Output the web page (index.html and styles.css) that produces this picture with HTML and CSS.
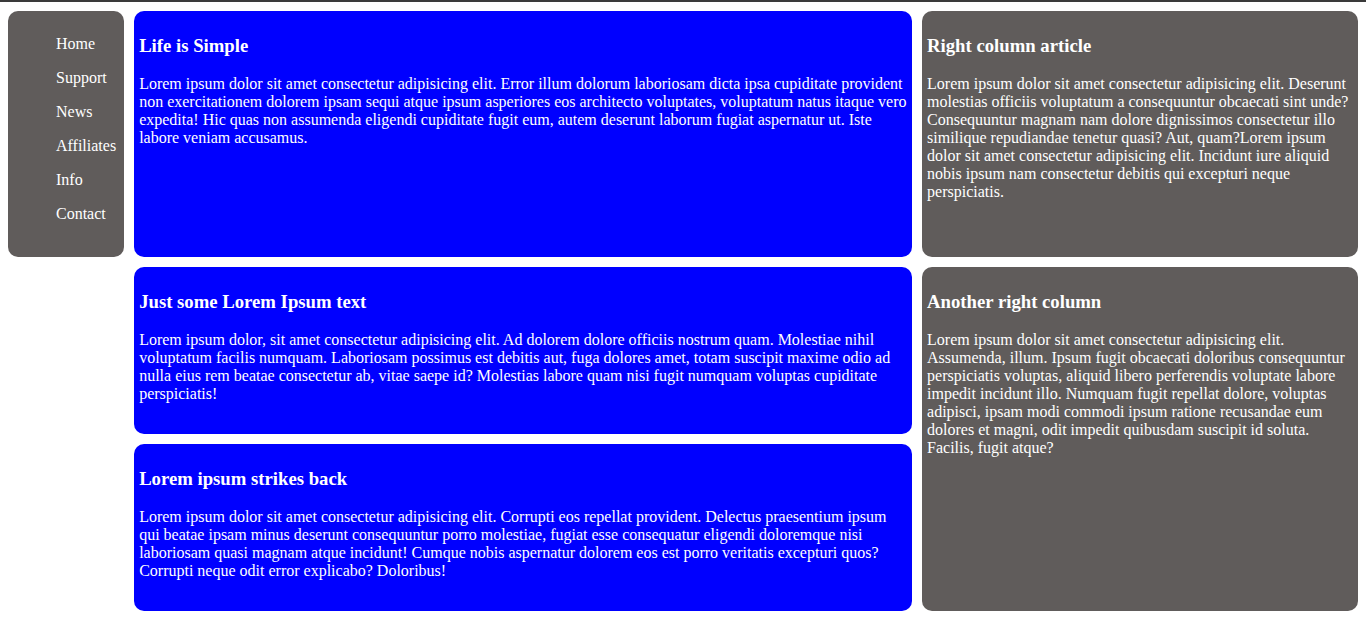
FILE: index.html
```html
<!DOCTYPE html>
<html lang="en">
<head>
<meta charset="utf-8">
<title>Layout</title>
<link rel="stylesheet" href="styles.css">
</head>
<body>
<div class="grid">
  <nav class="nav">
    <ul class="nav-list">
      <li>Home</li>
      <li>Support</li>
      <li>News</li>
      <li>Affiliates</li>
      <li>Info</li>
      <li>Contact</li>
    </ul>
  </nav>
  <section class="card blue r1">
    <h3>Life is Simple</h3>
    <p>Lorem ipsum dolor sit amet consectetur adipisicing elit. Error illum dolorum laboriosam dicta ipsa cupiditate provident non exercitationem dolorem ipsam sequi atque ipsum asperiores eos architecto voluptates, voluptatum natus itaque vero expedita! Hic quas non assumenda eligendi cupiditate fugit eum, autem deserunt laborum fugiat aspernatur ut. Iste labore veniam accusamus.</p>
  </section>
  <section class="card gray r1">
    <h3>Right column article</h3>
    <p>Lorem ipsum dolor sit amet consectetur adipisicing elit. Deserunt molestias officiis voluptatum a consequuntur obcaecati sint unde? Consequuntur magnam nam dolore dignissimos consectetur illo similique repudiandae tenetur quasi? Aut, quam?Lorem ipsum dolor sit amet consectetur adipisicing elit. Incidunt iure aliquid nobis ipsum nam consectetur debitis qui excepturi neque perspiciatis.</p>
  </section>
  <section class="card blue main2">
    <h3>Just some Lorem Ipsum text</h3>
    <p>Lorem ipsum dolor, sit amet consectetur adipisicing elit. Ad dolorem dolore officiis nostrum quam. Molestiae nihil voluptatum facilis numquam. Laboriosam possimus est debitis aut, fuga dolores amet, totam suscipit maxime odio ad nulla eius rem beatae consectetur ab, vitae saepe id? Molestias labore quam nisi fugit numquam voluptas cupiditate perspiciatis!</p>
  </section>
  <section class="card gray side2">
    <h3>Another right column</h3>
    <p>Lorem ipsum dolor sit amet consectetur adipisicing elit. Assumenda, illum. Ipsum fugit obcaecati doloribus consequuntur perspiciatis voluptas, aliquid libero perferendis voluptate labore impedit incidunt illo. Numquam fugit repellat dolore, voluptas adipisci, ipsam modi commodi ipsum ratione recusandae eum dolores et magni, odit impedit quibusdam suscipit id soluta. Facilis, fugit atque?</p>
  </section>
  <section class="card blue main3">
    <h3>Lorem ipsum strikes back</h3>
    <p>Lorem ipsum dolor sit amet consectetur adipisicing elit. Corrupti eos repellat provident. Delectus praesentium ipsum qui beatae ipsam minus deserunt consequuntur porro molestiae, fugiat esse consequatur eligendi doloremque nisi laboriosam quasi magnam atque incidunt! Cumque nobis aspernatur dolorem eos est porro veritatis excepturi quos? Corrupti neque odit error explicabo? Doloribus!</p>
  </section>
</div>
</body>
</html>
```

FILE: styles.css
```css
html {
  border-top: 2px solid #3a3a3a;
}
body {
  margin: 9px 8px 8px;
  font-family: "Liberation Serif", "Times New Roman", serif;
  font-size: 16px;
  color: #fff;
  background: #fff;
}
.grid {
  display: grid;
  grid-template-columns: 116fr 778fr 436fr;
  grid-template-rows: 245.5px 166.5px 166.5px;
  column-gap: 10px;
  row-gap: 10.5px;
}
.nav {
  grid-column: 1;
  grid-row: 1;
  background: #605c5b;
  border-radius: 10px;
}
.nav-list {
  list-style: none;
  margin: 16px 0;
  padding: 0 0 0 40px;
}
.nav-list li {
  padding: 8px;
  line-height: 18px;
}
.card {
  border-radius: 10px;
  padding: 5px;
}
.card h3 {
  font-size: 18.72px;
  margin: 18.72px 0;
}
.card p {
  margin: 16px 0;
  line-height: 18px;
}
.blue {
  background: #0000ff;
}
.gray {
  background: #605c5b;
}
.r1 {
  grid-row: 1;
}
.main2 {
  grid-column: 2;
  grid-row: 2;
}
.main3 {
  grid-column: 2;
  grid-row: 3;
}
.side2 {
  grid-column: 3;
  grid-row: 2 / span 2;
}
```
